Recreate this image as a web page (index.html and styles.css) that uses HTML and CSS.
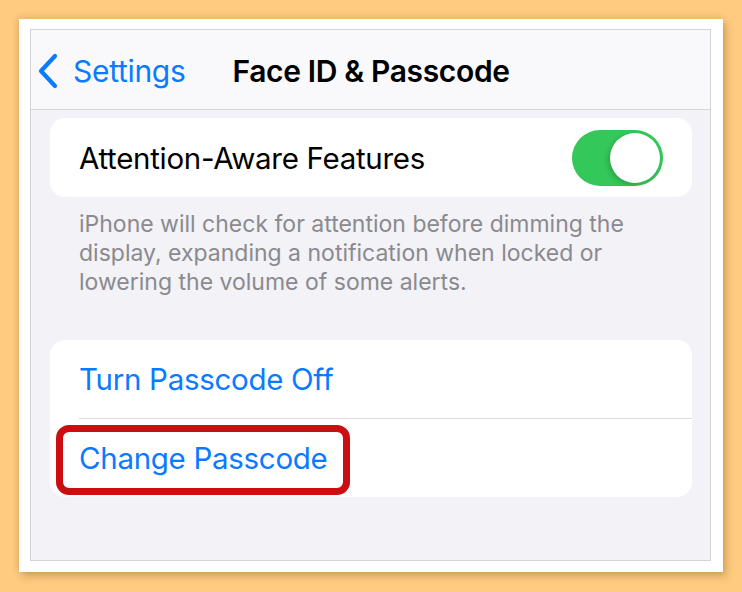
FILE: index.html
```html
<!DOCTYPE html>
<html>
<head>
    <title>Face ID &amp; Passcode</title>
    <link rel="stylesheet" href="styles.css">
</head>
<body>
    <div class="frame">
        <div class="screen">
            <div class="navbar">
                <a class="back">
                    <svg class="chevron" width="22" height="36" viewBox="0 0 22 36">
                        <path d="M18 3 L4 18 L18 33" fill="none" stroke="#0a7aff" stroke-width="4.2" stroke-linecap="round" stroke-linejoin="round"/>
                    </svg>
                    <span>Settings</span>
                </a>
                <div class="title">Face ID &amp; Passcode</div>
            </div>

            <div class="content">
                <div class="group">
                    <div class="row">
                        <span class="label">Attention-Aware Features</span>
                        <div class="toggle on"><div class="knob"></div></div>
                    </div>
                </div>
                <p class="footer">iPhone will check for attention before dimming the display, expanding a notification when locked or lowering the volume of some alerts.</p>

                <div class="group links">
                    <div class="row link">Turn Passcode Off</div>
                    <div class="row link highlight">
                        <span>Change Passcode</span>
                    </div>
                </div>
            </div>
        </div>
    </div>
</body>
</html>
```

FILE: styles.css
```css
* {
    margin: 0;
    padding: 0;
    box-sizing: border-box;
}

body {
    width: 742px;
    height: 592px;
    background: #fecb80;
    font-family: Inter, 'Noto Sans', sans-serif;
    padding: 19px 0 0 19px;
}

.frame {
    width: 704px;
    height: 553px;
    background: #fff;
    padding: 10px 11px 0 11px;
    box-shadow: 3px 4px 8px rgba(120, 80, 20, 0.35), -2px -2px 6px rgba(120, 80, 20, 0.15);
}

.screen {
    width: 681px;
    height: 532px;
    border: 1px solid #d3d3d6;
    background: #f2f2f7;
    overflow: hidden;
}

.navbar {
    height: 80px;
    background: #f9f9fb;
    border-bottom: 1px solid #d6d6d9;
    display: flex;
    align-items: center;
    padding-left: 6px;
    padding-top: 2px;
}

.back {
    display: flex;
    align-items: center;
    gap: 14px;
    color: #0a7aff;
    font-size: 30px;
    letter-spacing: -0.3px;
}

.title {
    margin-left: 47px;
    font-size: 30px;
    font-weight: 600;
    color: #000;
    letter-spacing: -0.35px;
}

.content {
    padding: 8px 18px 0 19px;
}

.group {
    background: #fff;
    border-radius: 15px;
}

.row {
    height: 79px;
    display: flex;
    align-items: center;
    justify-content: space-between;
    padding: 0 29px 0 29px;
    font-size: 29.5px;
    letter-spacing: -0.3px;
    color: #000;
}

.toggle {
    width: 91px;
    height: 56px;
    border-radius: 28px;
    background: #34c759;
    position: relative;
}

.knob {
    position: absolute;
    top: 3px;
    right: 3px;
    width: 50px;
    height: 50px;
    border-radius: 50%;
    background: #fff;
    box-shadow: -2px 2px 5px rgba(0, 0, 0, 0.18);
}

.footer {
    padding: 13px 40px 0 29px;
    font-size: 23px;
    line-height: 29px;
    color: #8a8a8e;
    height: 143px;
}

.links .row {
    height: 78px;
    color: #0a7aff;
    justify-content: flex-start;
}

.links .row:first-child {
    height: 79px;
    border-bottom: 1px solid #dcdce0;
    margin-left: 29px;
    padding-left: 0;
}

.highlight {
    position: relative;
}

.highlight::before {
    content: '';
    box-sizing: border-box;
    position: absolute;
    left: 6px;
    top: 6px;
    width: 294px;
    height: 70px;
    border: 7px solid #cc0e10;
    border-radius: 13px;
}
```
